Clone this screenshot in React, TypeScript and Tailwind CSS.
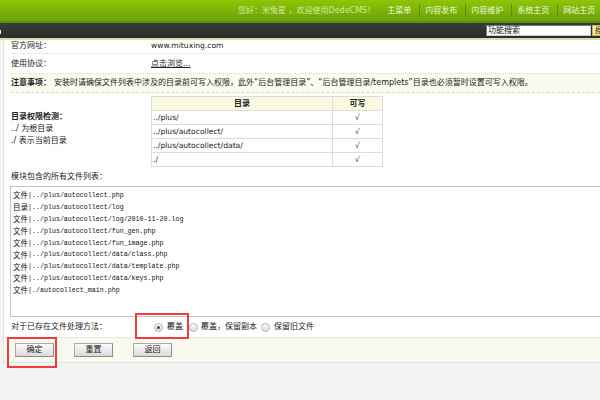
import React from 'react';

const dirs = ['../plus/', '../plus/autocollect/', '../plus/autocollect/data/', './'];

const files: [string, string][] = [
  ['文件', '|../plus/autocollect.php'],
  ['目录', '|../plus/autocollect/log'],
  ['文件', '|../plus/autocollect/log/2010-11-20.log'],
  ['文件', '|../plus/autocollect/fun_gen.php'],
  ['文件', '|../plus/autocollect/fun_image.php'],
  ['文件', '|../plus/autocollect/data/class.php'],
  ['文件', '|../plus/autocollect/data/template.php'],
  ['文件', '|../plus/autocollect/data/keys.php'],
  ['文件', '|./autocollect_main.php'],
];

const menu = ['主菜单', '内容发布', '内容维护', '系统主页', '网站主页', '更多'];

const Radio: React.FC<{ checked?: boolean }> = ({ checked }) => (
  <span className="w-[9px] h-[9px] rounded-full border border-[#b4b4b4] bg-gradient-to-b from-[#fafafa] to-[#dedede] flex items-center justify-center shrink-0">
    {checked && <span className="w-[3px] h-[3px] rounded-full bg-[#444]" />}
  </span>
);

const Btn: React.FC<{ label: string }> = ({ label }) => (
  <button className="w-[39px] h-[14px] border border-[#a9a9a9] border-r-[#8c8c8c] border-b-[#8c8c8c] bg-gradient-to-b from-[#fbfbfb] to-[#dadada] text-[8px] leading-none text-[#222] flex items-center justify-center">
    {label}
  </button>
);

export default function App() {
  return (
    <div
      className="relative w-[600px] h-[400px] overflow-hidden bg-[#f4f4f4] text-[8px] text-[#222]"
      style={{ fontFamily: '"DejaVu Sans", "Noto Sans CJK SC", sans-serif' }}
    >
      <div className="w-[640px]">
        {/* top green bar */}
        <div className="h-[23px] bg-gradient-to-b from-[#8fc406] to-[#69a40a] border-b-2 border-[#5a920a] flex items-center pl-[238px]">
          <span className="text-[#d3eaa0] mr-[12px]">您好：米兔星 ，欢迎使用DedeCMS！</span>
          {menu.map((m, i) => (
            <React.Fragment key={m}>
              {i > 0 && <span className="w-px h-[13px] bg-[#5a9008] mr-[5px]" />}
              <span className="text-[#eef7dc] pr-[8px]">{m}</span>
            </React.Fragment>
          ))}
        </div>

        {/* dark bar */}
        <div className="h-[15px] bg-gradient-to-b from-[#3a3a3a] to-[#2c2c2c] flex items-center">
          <span className="w-px h-[4px] bg-white mt-[2px]" />
          <div className="ml-[485px] w-[105px] h-[11px] bg-white border border-[#777] border-r-[#ccc] border-b-[#ccc] flex items-center pl-[1px] text-[#111] leading-none">
            功能搜索
          </div>
          <div className="ml-[1px] w-[34px] h-[11px] bg-gradient-to-b from-[#fcf3bf] to-[#efdc85] border border-[#c8b45c] flex items-center pl-[2px] leading-none">
            搜索
          </div>
        </div>
        <div className="h-[2px] bg-[#cfe5a4]" />

        {/* content */}
        <div className="ml-[3px] bg-white border-l border-b border-[#e2e2e2]">
          <div className="pl-[7px]">
            <div className="flex h-[14px] leading-[11px] border-b border-dotted border-[#d8d8d8]">
              <span className="w-[140px]">官方网址：</span>
              <span className="text-[7.6px]">www.mituxing.com</span>
            </div>
            <div className="flex h-[20px] items-center border-b border-dotted border-[#d8d8d8]">
              <span className="w-[140px]">使用协议：</span>
              <span className="underline">点击浏览...</span>
            </div>
            <div className="flex h-[19px] items-center bg-[#fafaee] border-b border-dashed border-[#dcdcc4]">
              <span className="font-bold">注意事项：</span>
              <span className="ml-[3px]">
                安装时请确保文件列表中涉及的目录前可写入权限，此外“后台管理目录”、“后台管理目录/templets”目录也必须暂时设置可写入权限。
              </span>
            </div>

            <div className="flex items-center py-[3px]">
              <div className="w-[140px] leading-[12px] mb-[5px]">
                <div className="font-bold">目录权限检测：</div>
                <div>../ 为根目录</div>
                <div>./ 表示当前目录</div>
              </div>
              <div className="grid grid-cols-[181px_50px] border-t border-l border-[#dcdcdc]">
                <div className="h-[14px] border-r border-b border-[#dcdcdc] bg-[#fafae2] font-bold flex items-center justify-center">目录</div>
                <div className="h-[14px] border-r border-b border-[#dcdcdc] bg-[#fafae2] font-bold flex items-center justify-center">可写</div>
                {dirs.map((d) => (
                  <React.Fragment key={d}>
                    <div className="h-[14px] border-r border-b border-[#dcdcdc] flex items-center pl-[1px] text-[7.6px]">{d}</div>
                    <div className="h-[14px] border-r border-b border-[#dcdcdc] flex items-center justify-center text-[#444] text-[7.6px]">√</div>
                  </React.Fragment>
                ))}
              </div>
            </div>

            <div className="h-[16px] flex items-center pb-[2px]">模块包含的所有文件列表：</div>
            <div className="-ml-[1px] h-[131px] border border-[#c4c4c4] pl-[2px] pt-[2px] text-[#111]">
              {files.map(([k, p], i) => (
                <div key={i} className="h-[11.9px] flex items-center whitespace-nowrap">
                  <span className="text-[7.5px] leading-none" style={{ fontFamily: '"Noto Sans CJK SC", sans-serif' }}>
                    {k}
                  </span>
                  <span
                    className="inline-block text-[8px] leading-none origin-left scale-x-[0.83]"
                    style={{ fontFamily: '"Liberation Mono", monospace' }}
                  >
                    {p}
                  </span>
                </div>
              ))}
            </div>

            <div className="flex h-[20px] items-center">
              <span className="w-[143px]">对于已存在文件处理方法：</span>
              <Radio checked />
              <span className="ml-[4px] mr-[6px]">覆盖</span>
              <Radio />
              <span className="ml-[3px] mr-[4px]">覆盖，保留副本</span>
              <Radio />
              <span className="ml-[4px]">保留旧文件</span>
            </div>
          </div>

          <div className="h-[25px] bg-[#f9f9ef] border-t border-[#e6e6e6] flex items-center pl-[11px] gap-[20px]">
            <Btn label="确定" />
            <Btn label="重置" />
            <Btn label="返回" />
          </div>
        </div>
      </div>

      {/* red annotation boxes */}
      <div className="absolute left-[135px] top-[313px] w-[54px] h-[26px] border-2 border-[#f23b3b]" />
      <div className="absolute left-[7px] top-[337px] w-[50px] h-[31px] border-2 border-[#f23b3b]" />
    </div>
  );
}
